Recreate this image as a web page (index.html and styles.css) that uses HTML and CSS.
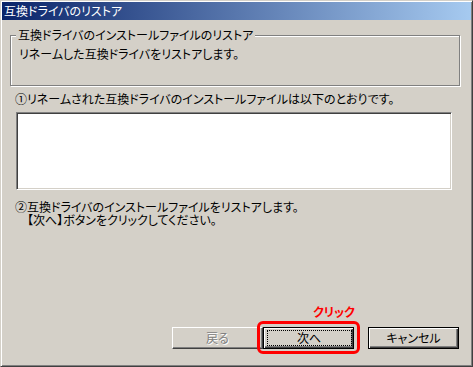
FILE: index.html
```html
<!DOCTYPE html>
<html lang="ja">
<head>
    <meta charset="UTF-8">
    <title>互換ドライバのリストア</title>
    <link rel="stylesheet" href="styles.css">
</head>
<body>
    <div class="window">
        <div class="title-bar">互換ドライバのリストア</div>

        <div class="content">
            <!-- 見出しグループ -->
            <fieldset class="group">
                <legend>互換ドライバのインストールファイルのリストア</legend>
                <p class="group-text">リネームした互換ドライバをリストアします。</p>
            </fieldset>

            <p class="step-one">①リネームされた互換ドライバのインストールファイルは以下のとおりです。</p>
            <div class="file-list"></div>

            <div class="step-two">
                <p>②互換ドライバのインストールファイルをリストアします。</p>
                <p class="step-two-sub">【次へ】ボタンをクリックしてください。</p>
            </div>

            <!-- ボタン -->
            <div class="button-row">
                <button class="btn btn-disabled" disabled>戻る</button>
                <button class="btn btn-default"><span class="focus-rect">次へ</span></button>
                <button class="btn btn-default btn-cancel">キャンセル</button>
            </div>
        </div>

        <!-- 注釈 -->
        <div class="callout-box"></div>
        <div class="callout-label">クリック</div>
    </div>
</body>
</html>
```

FILE: styles.css
```css
body {
    margin: 0;
    font-family: "Noto Sans CJK JP", sans-serif;
    font-size: 12px;
    font-feature-settings: "palt";
    color: #000;
    background: #d4d0c8;
}

.window {
    position: relative;
    width: 473px;
    height: 367px;
    box-sizing: border-box;
    display: flex;
    flex-direction: column;
    padding: 1px;
    background: #d4d0c8;
    border-top: 1px solid #d4d0c8;
    border-left: 1px solid #d4d0c8;
    border-right: 1px solid #404040;
    border-bottom: 1px solid #404040;
    box-shadow: inset 1px 1px #fff, inset -1px -1px #808080;
}

.title-bar {
    height: 18px;
    line-height: 17px;
    padding-left: 2px;
    color: #fff;
    background: linear-gradient(to right, #0a246a, #a6caf0);
    white-space: nowrap;
}

.content {
    flex: 1;
    display: flex;
    flex-direction: column;
    padding: 0 12px 16px 0;
}

.group {
    margin: 9px 0 0 8px;
    padding: 7px 5px 25px 5px;
    width: 450px;
    box-sizing: border-box;
    border: 1px solid #808080;
    box-shadow: inset 1px 1px #fff, 1px 1px #fff;
}

.group legend {
    padding: 0 2px;
    line-height: 12px;
    background: #d4d0c8;
}

.group-text {
    margin: 0 0 0 3px;
    line-height: 12px;
}

.step-one {
    margin: 7px 0 0 13px;
    line-height: 12px;
}

.file-list {
    margin: 7px 0 0 14px;
    width: 436px;
    height: 78px;
    box-sizing: border-box;
    background: #fff;
    border-top: 1px solid #808080;
    border-left: 1px solid #808080;
    border-right: 1px solid #fff;
    border-bottom: 1px solid #fff;
    box-shadow: inset 1px 1px #404040, inset -1px -1px #d4d0c8;
}

.step-two {
    margin: 10px 0 0 13px;
    display: flex;
    flex-direction: column;
    gap: 0;
}

.step-two p {
    margin: 0;
    line-height: 13px;
}

.step-two .step-two-sub {
    padding-left: 12px;
}

.button-row {
    margin-top: auto;
    display: flex;
    justify-content: flex-end;
}

.btn {
    width: 91px;
    height: 22px;
    padding: 0;
    font-family: inherit;
    font-size: 12px;
    font-feature-settings: "palt";
    line-height: 12px;
    color: #000;
    background: #d4d0c8;
    display: flex;
    align-items: center;
    justify-content: center;
}

.btn-disabled {
    color: #808080;
    text-shadow: 1px 1px #fff;
    border-top: 1px solid #fff;
    border-left: 1px solid #fff;
    border-right: 1px solid #404040;
    border-bottom: 1px solid #404040;
    box-shadow: inset -1px -1px #808080;
}

.btn-default {
    border: 1px solid #000;
    box-shadow: inset 1px 1px #fff, inset -1px -1px #404040, inset -2px -2px #808080;
}

.btn-cancel {
    margin-left: 14px;
}

.focus-rect {
    display: flex;
    align-items: center;
    justify-content: center;
    width: 83px;
    height: 14px;
    margin-left: 1px;
    border: 1px dotted #000;
}

.callout-box {
    position: absolute;
    left: 256px;
    top: 320px;
    width: 103px;
    height: 33px;
    box-sizing: border-box;
    border: 3px solid #f00;
    border-radius: 6px;
}

.callout-label {
    position: absolute;
    left: 312px;
    top: 305px;
    color: #f00;
    font-weight: bold;
    font-size: 12px;
    line-height: 12px;
}
```
